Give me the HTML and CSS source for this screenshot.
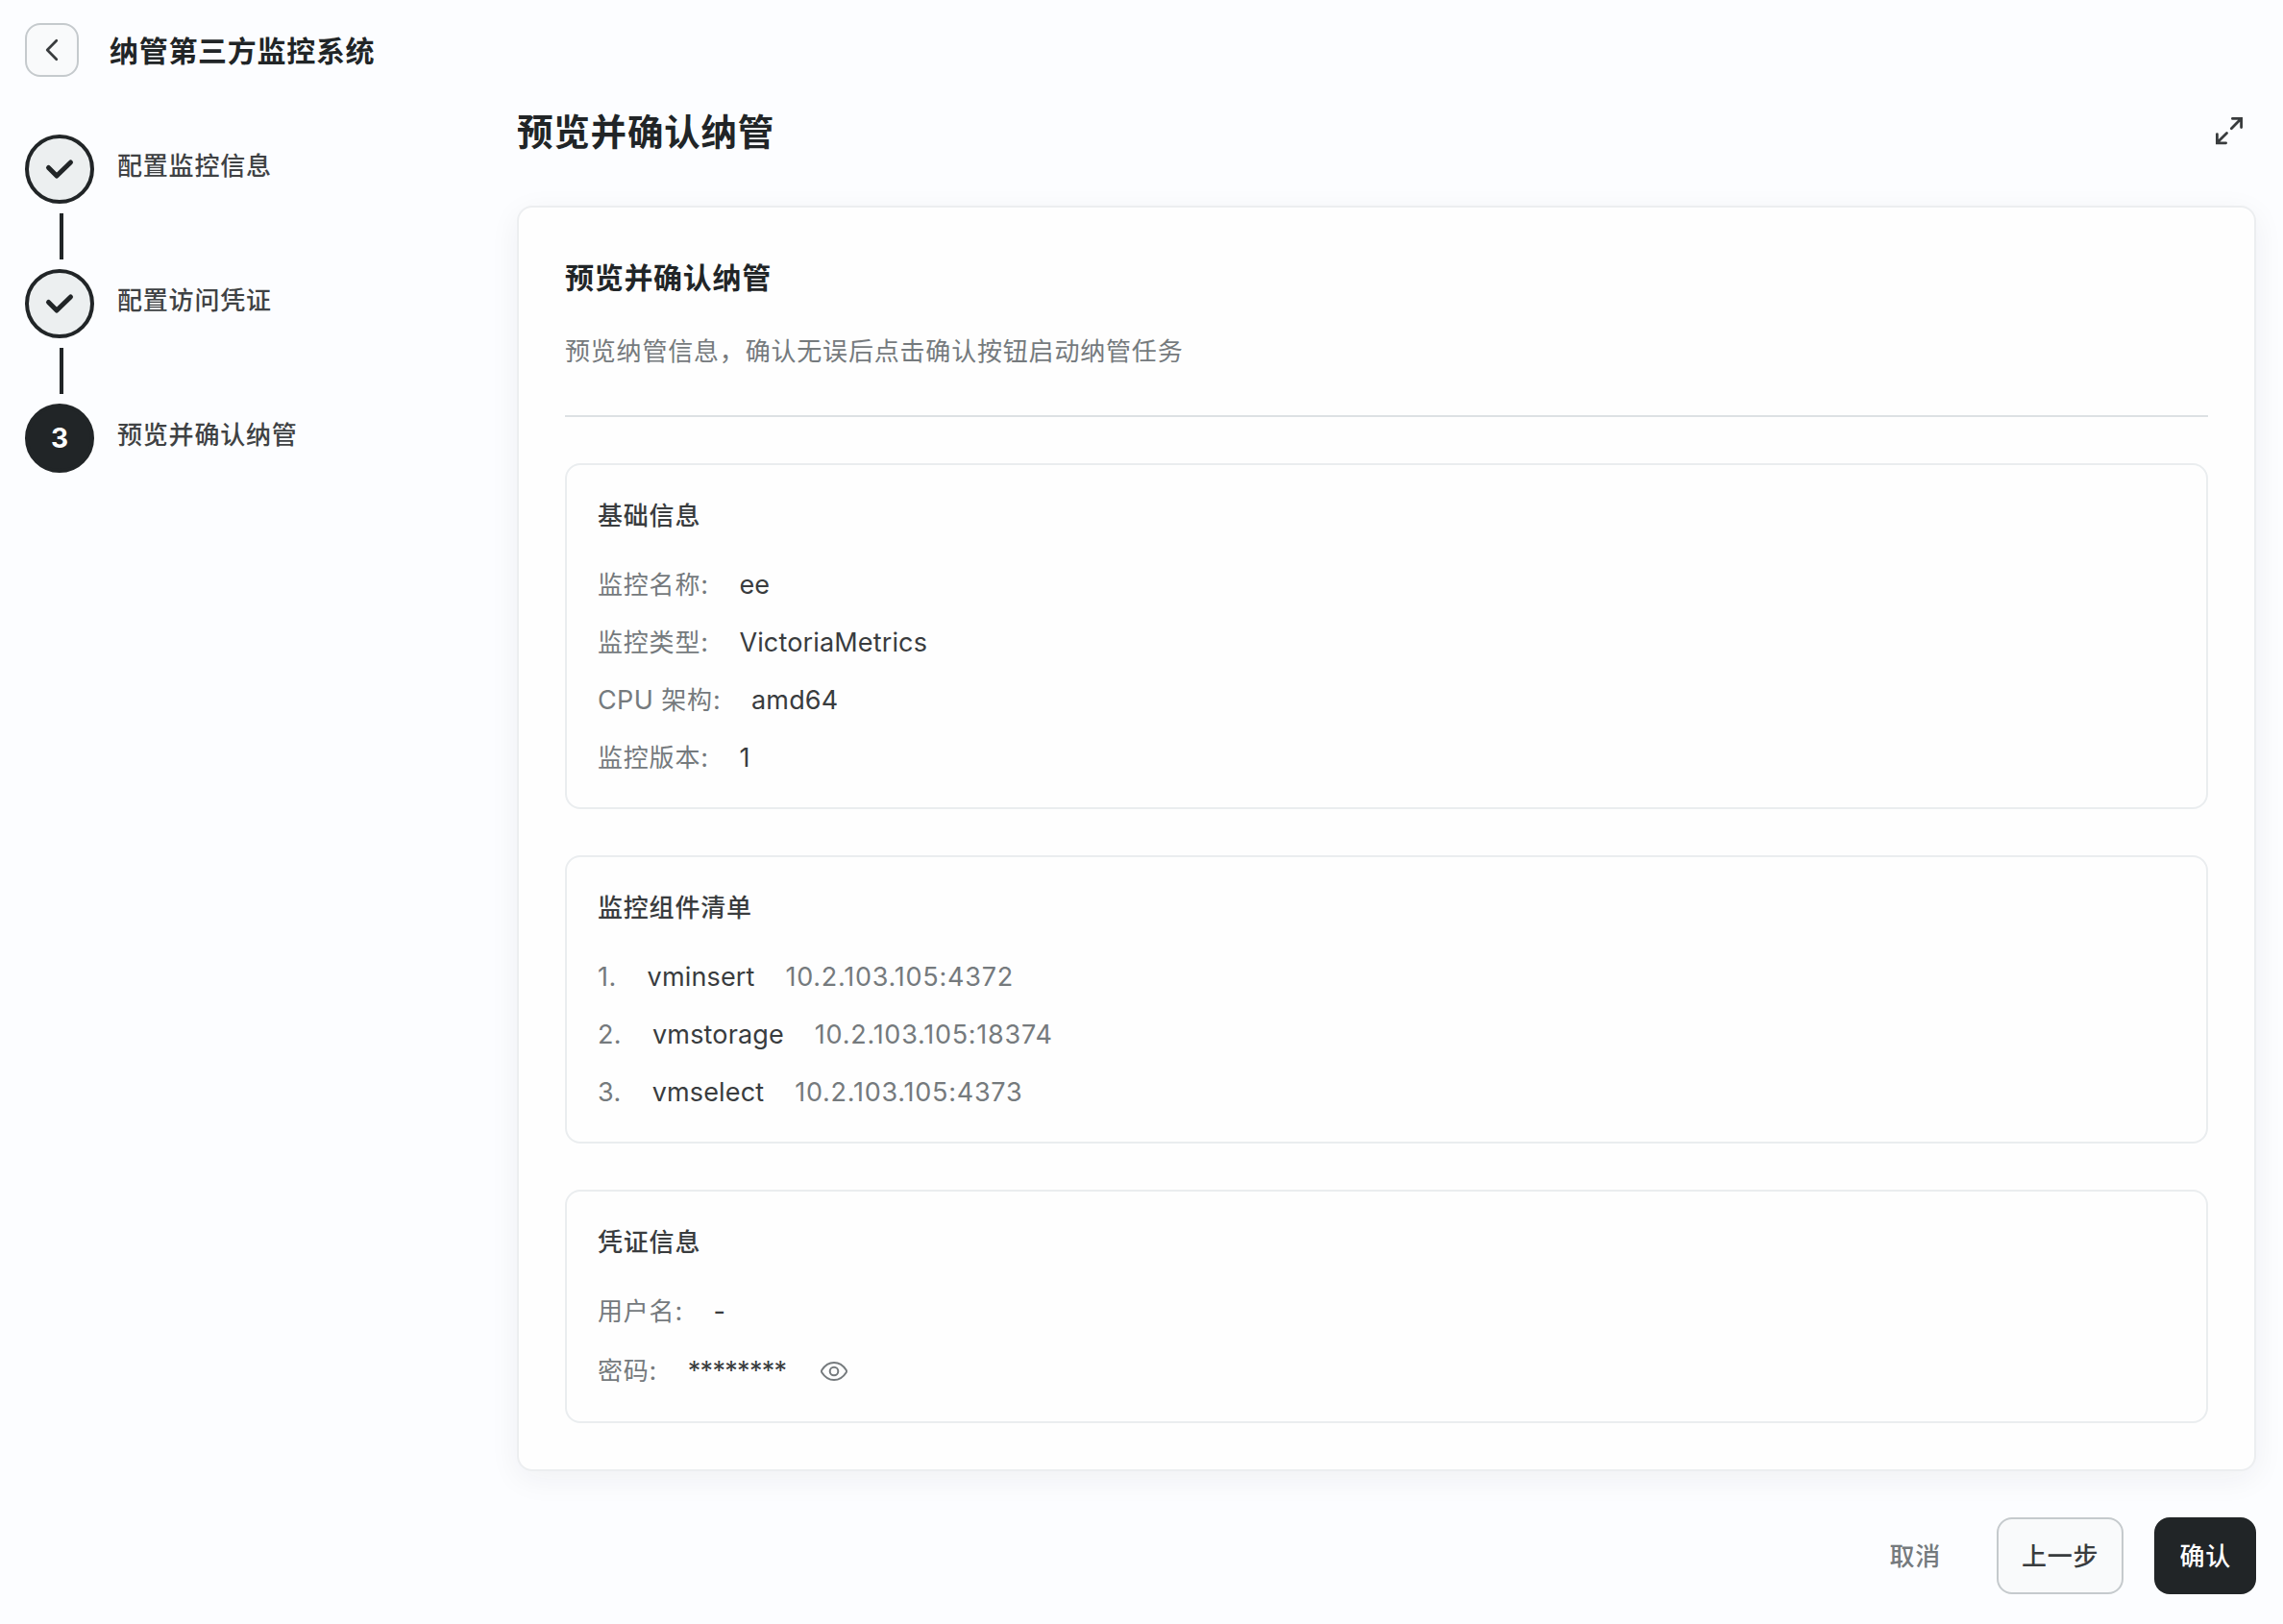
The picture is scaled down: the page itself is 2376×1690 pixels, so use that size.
FILE: index.html
```html
<!DOCTYPE html>
<html lang="zh-CN">
<head>
    <meta charset="UTF-8">
    <meta name="viewport" content="width=device-width, initial-scale=1.0">
    <title>纳管第三方监控系统</title>
    <link rel="stylesheet" href="styles.css">
</head>
<body>
    <header class="topbar">
        <button class="back-btn" type="button" aria-label="返回">
            <svg width="32" height="32" viewBox="0 0 32 32" fill="none" stroke="currentColor" stroke-width="2.7" stroke-linecap="round" stroke-linejoin="round"><path d="M20.800 6.300 11.200 16 20.800 25.700"/></svg>
        </button>
        <h1 class="topbar-title">纳管第三方监控系统</h1>
    </header>

    <div class="layout">
        <aside class="steps">
            <div class="step">
                <div class="step-circle done">
                    <svg width="32" height="32" viewBox="0 0 32 32" fill="none" stroke="currentColor" stroke-width="5" stroke-linecap="round" stroke-linejoin="round"><path d="M4.500 14.500 13 23 27.500 9"/></svg>
                </div>
                <span class="step-label">配置监控信息</span>
            </div>
            <div class="step-line"></div>
            <div class="step">
                <div class="step-circle done">
                    <svg width="32" height="32" viewBox="0 0 32 32" fill="none" stroke="currentColor" stroke-width="5" stroke-linecap="round" stroke-linejoin="round"><path d="M4.500 14.500 13 23 27.500 9"/></svg>
                </div>
                <span class="step-label">配置访问凭证</span>
            </div>
            <div class="step-line"></div>
            <div class="step">
                <div class="step-circle active">3</div>
                <span class="step-label">预览并确认纳管</span>
            </div>
        </aside>

        <main class="content">
            <div class="content-header">
                <h2 class="content-title">预览并确认纳管</h2>
                <svg class="expand-icon" width="32" height="32" viewBox="0 0 32 32" fill="none" stroke="currentColor" stroke-width="2.8" stroke-linecap="round"><path d="M18.300 13.700 28.400 3.600M19.400 3.400h9.200v9.200M13.500 18.500 3.400 28.600M3.400 19.600v9.200h9.200"/></svg>
            </div>

            <section class="card">
                <h3 class="card-title">预览并确认纳管</h3>
                <p class="card-desc">预览纳管信息，确认无误后点击确认按钮启动纳管任务</p>

                <div class="panel">
                    <h4 class="panel-title">基础信息</h4>
                    <div class="row"><span class="label">监控名称<i>:</i></span><span class="value">ee</span></div>
                    <div class="row"><span class="label">监控类型<i>:</i></span><span class="value">VictoriaMetrics</span></div>
                    <div class="row"><span class="label"><i>CPU </i>架构<i>:</i></span><span class="value">amd64</span></div>
                    <div class="row"><span class="label">监控版本<i>:</i></span><span class="value">1</span></div>
                </div>

                <div class="panel">
                    <h4 class="panel-title">监控组件清单</h4>
                    <div class="row"><span class="index">1.</span><span class="value">vminsert</span><span class="addr">10.2.103.105:4372</span></div>
                    <div class="row"><span class="index">2.</span><span class="value">vmstorage</span><span class="addr">10.2.103.105:18374</span></div>
                    <div class="row"><span class="index">3.</span><span class="value">vmselect</span><span class="addr">10.2.103.105:4373</span></div>
                </div>

                <div class="panel">
                    <h4 class="panel-title">凭证信息</h4>
                    <div class="row"><span class="label">用户名<i>:</i></span><span class="value">-</span></div>
                    <div class="row row-password">
                        <span class="label">密码<i>:</i></span><span class="value password">********</span>
                        <svg class="eye-icon" width="32" height="32" viewBox="0 0 32 32" fill="none" stroke="currentColor" stroke-width="2"><path d="M3.300 14.800C6.500 9.800 10.800 7 16 7s9.500 2.800 12.700 7.800q.7 1.200 0 2.400C25.500 22.200 21.200 25 16 25S6.500 22.200 3.300 17.200q-.7-1.200 0-2.400z" stroke-linejoin="round"/><circle cx="16" cy="16" r="4.300"/></svg>
                    </div>
                </div>
            </section>

            <footer class="actions">
                <button class="btn btn-text" type="button">取消</button>
                <button class="btn btn-default" type="button">上一步</button>
                <button class="btn btn-primary" type="button">确认</button>
            </footer>
        </main>
    </div>
</body>
</html>
```
FILE: styles.css
```css
* {
    box-sizing: border-box;
    margin: 0;
    padding: 0;
}
body {
    background-color: #fcfdff;
    color: #393c3e;
    font-family: Inter, "Noto Sans CJK SC", sans-serif;
    font-size: 26px;
    line-height: 36px;
}
button {
    font: inherit;
    color: inherit;
}
svg {
    display: block;
    flex: none;
}

/* top bar */
.topbar {
    display: flex;
    align-items: center;
    height: 104px;
    padding: 0 26px;
    gap: 32px;
}
.back-btn {
    display: flex;
    align-items: center;
    justify-content: center;
    width: 56px;
    height: 56px;
    border: 2px solid #c5cacd;
    border-radius: 16px;
    background-color: #f9fafb;
}
.topbar-title {
    padding-top: 2px;
    font-size: 30px;
    font-weight: 600;
    line-height: 44px;
    letter-spacing: 0.7px;
    color: #212527;
}

.layout {
    display: flex;
}

/* steps */
.steps {
    width: 538px;
    padding: 36px 26px 0;
    flex: none;
}
.step {
    display: flex;
    gap: 24px;
}
.step-circle {
    display: flex;
    align-items: center;
    justify-content: center;
    width: 72px;
    height: 72px;
    border-radius: 50%;
    border: 4px solid #212527;
    color: #212527;
    font-size: 28px;
    font-weight: 700;
}
.done {
    background-color: #eceff0;
}
.active {
    background-color: #212527;
    color: #fff;
}
.step-label {
    color: #3f4244;
    font-weight: 500;
    line-height: 66px;
    letter-spacing: 0.8px;
}
.step-line {
    width: 4px;
    height: 48px;
    margin: 10px 0 10px 36px;
    background-color: #212527;
}

/* content */
.content {
    width: 1810px;
}
.content-header {
    display: flex;
    align-items: center;
    justify-content: space-between;
    height: 64px;
    padding-right: 12px;
    margin-bottom: 46px;
}
.content-title {
    padding-top: 4px;
    font-size: 37.5px;
    font-weight: 600;
    line-height: 60px;
    letter-spacing: 0.8px;
    color: #212527;
}
.card {
    border: 2px solid #eceef0;
    border-radius: 16px;
    background-color: #fefefe;
    padding: 48px;
    box-shadow: 0 8px 32px rgba(33, 37, 50, 0.06);
}
.card-title {
    margin-bottom: 34px;
    font-size: 30px;
    font-weight: 600;
    line-height: 50px;
    letter-spacing: 0.7px;
    color: #212527;
}
.card-desc {
    height: 86px;
    margin-bottom: 48px;
    border-bottom: 2px solid #dde1e4;
    letter-spacing: 0.81px;
    color: #757a7d;
}
.panel {
    padding: 32px 32px 33px;
    border: 2px solid #eaedef;
    border-radius: 16px;
}
.panel + .panel {
    margin-top: 48px;
}
.panel-title {
    margin-bottom: 33px;
    font-size: 26px;
    font-weight: 500;
    line-height: 42px;
    letter-spacing: 0.8px;
}
.row {
    display: flex;
    align-items: center;
    gap: 32px;
    height: 36px;
    white-space: pre;
}
.row + .row {
    margin-top: 24px;
}
.row-password {
    height: 39px;
}
.label {
    letter-spacing: 0.8px;
    color: #757a7d;
}
.label i {
    font-size: 27px;
    font-style: normal;
    letter-spacing: 0.4px;
}
.value,
.index,
.addr {
    font-size: 27px;
    letter-spacing: 0.15px;
}
.index,
.addr,
.eye-icon {
    color: #757a7d;
}
.addr {
    letter-spacing: 0.75px;
}
.index {
    letter-spacing: 0.4px;
}
.password {
    margin-right: 2px;
    letter-spacing: -0.7px;
}

/* footer */
.actions {
    display: flex;
    justify-content: flex-end;
    gap: 32px;
    margin-top: 48px;
}
.btn {
    height: 80px;
    padding: 2px 24px 0;
    border: 2px solid transparent;
    border-radius: 16px;
    font-weight: 500;
    letter-spacing: 0.8px;
    white-space: nowrap;
    background-color: transparent;
}
.btn-text {
    color: #757a7d;
}
.btn-default {
    border-color: #c5cacd;
    background-color: #f9fafb;
}
.btn-primary {
    background-color: #212527;
    color: #fff;
}
```
